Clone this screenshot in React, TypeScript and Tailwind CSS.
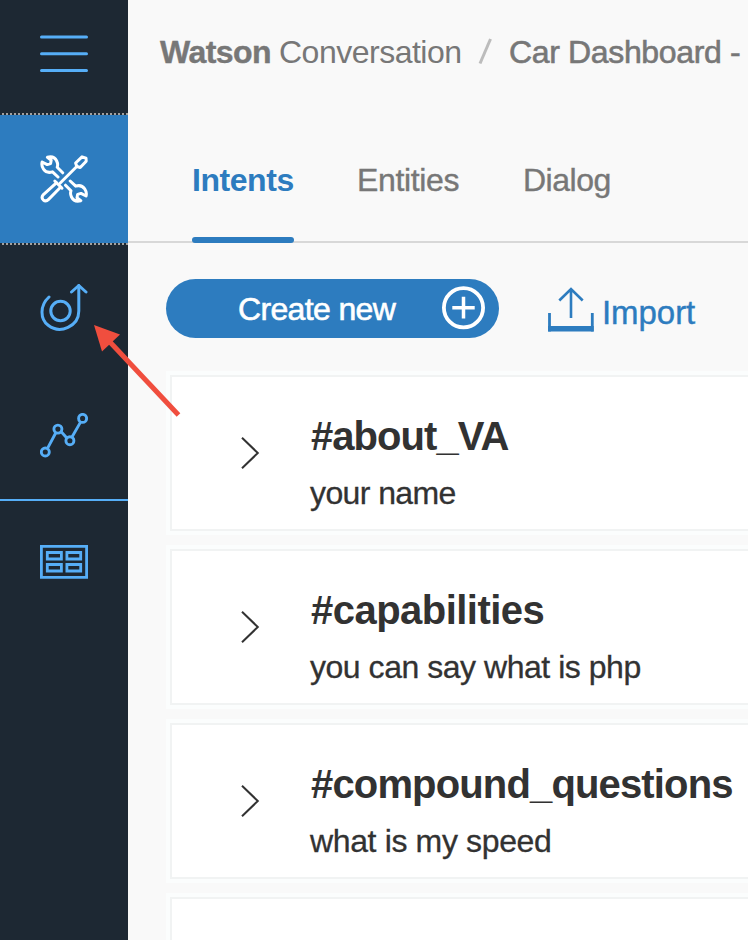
import React from "react";

const intents = [
  { name: "#about_VA", example: "your name", nameTracking: "tracking-[-0.95px]", exampleTracking: "tracking-[-0.6px]" },
  { name: "#capabilities", example: "you can say what is php", nameTracking: "tracking-[-0.53px]", exampleTracking: "tracking-[-0.47px]" },
  { name: "#compound_questions", example: "what is my speed", nameTracking: "tracking-[-0.85px]", exampleTracking: "tracking-[-0.36px]" },
  { name: "", example: "", nameTracking: "", exampleTracking: "" },
];

const wrenchPath =
  "M18 22L12.5 16.8C9 18 5.5 17 3.5 14.2C2 12 1.5 9.5 2.1 7L7.2 9.6L10.6 8.6L11.2 5.2L7.4 2.3C11.2 1.3 15 2.5 16.7 6C17.8 8.3 17.9 10.5 17.2 12.3L22.7 17.8";

function MenuIcon() {
  return (
    <svg className="h-12 w-12" viewBox="0 0 48 48" fill="none" stroke="#56aef7" strokeWidth="3" strokeLinecap="round">
      <path d="M1.5 7H46.5M1.5 23.7H46.5M1.5 40.5H46.5" />
    </svg>
  );
}

function ToolsIcon() {
  return (
    <svg className="h-12 w-12" viewBox="0 0 48 48" fill="none" stroke="#fff" strokeWidth="3" strokeLinecap="round" strokeLinejoin="round">
      <path d={wrenchPath} />
      <path d={wrenchPath} transform="rotate(180 24.1 24)" />
      <path d="M20 28.2L37 11.3" />
      <path d="M36.8 11.5L35.6 8L42 1.8L46 3.2L46.2 6.2L40.2 12.5L36.8 11.5Z" />
      <path d="M14.8 26L22 33.2" />
      <path d="M16.4 27.8L3.4 39.6C1.8 41.4 1.8 43.4 3.2 44.8C4.8 46.3 6.9 46.1 8.6 44.4L20.8 32" />
    </svg>
  );
}

function TargetIcon() {
  return (
    <svg className="h-12 w-12" viewBox="0 0 48 48" fill="none" stroke="#56aef7" strokeWidth="3" strokeLinecap="round" strokeLinejoin="round">
      <circle cx="20.5" cy="27" r="9.7" />
      <path d="M9 13C-.4 21.5 0 35 8.2 41.3C20.2 50.6 38.8 42.2 38.8 27V1.5" />
      <path d="M31.5 8L38.8 1.5L46 8" />
    </svg>
  );
}

function ChartIcon() {
  return (
    <svg className="h-12 w-12" viewBox="0 0 48 48" fill="none" stroke="#56aef7" strokeWidth="2.9">
      <path d="M7.5 35.4L15.7 20M21.2 18.8L26.6 24.8M32 24L40.4 9.4" />
      <circle cx="5.3" cy="39" r="4" />
      <circle cx="17.9" cy="16.1" r="4" />
      <circle cx="29.9" cy="27.7" r="4" />
      <circle cx="42.6" cy="5.4" r="4" />
    </svg>
  );
}

function TableIcon() {
  return (
    <svg className="h-[34px] w-12" viewBox="0 0 48 34" fill="none" stroke="#56aef7" strokeWidth="2.8">
      <path d="M1.4 1.4H46.6V32.4H1.4ZM7.3 7.5H21.4V14H7.3ZM26.9 7.5H40.7V14H26.9ZM7.3 19.5H21.4V26H7.3ZM26.9 19.5H40.7V26H26.9Z" />
    </svg>
  );
}

function DottedLine() {
  return (
    <div className="h-0.5 w-full bg-[repeating-linear-gradient(90deg,#1d2833_0px,#1d2833_2px,#a3a19f_2px,#a3a19f_4px)]" />
  );
}

function Sidebar() {
  return (
    <aside className="flex h-full w-32 shrink-0 flex-col bg-[#1d2833]">
      <div className="flex h-[113px] justify-center pt-[30px]"><MenuIcon /></div>
      <DottedLine />
      <div className="flex h-32 justify-center bg-[#2d7cbf] pt-10"><ToolsIcon /></div>
      <DottedLine />
      <div className="flex h-[127px] justify-center pt-[39px]"><TargetIcon /></div>
      <div className="flex h-[127px] justify-center pt-[41px]"><ChartIcon /></div>
      <div className="h-0.5 bg-[#56aef7]" />
      <div className="flex justify-center pt-11"><TableIcon /></div>
    </aside>
  );
}

function IntentCard({ intent }: { intent: (typeof intents)[number] }) {
  return (
    <article className="flex h-[156px] w-[700px] shrink-0 border-2 border-[#f1f3f3] bg-white shadow-[0_0_0_4px_#fbfdfd]">
      {intent.name && (
        <>
          <svg className="mt-[58px] ml-[68px] h-9 w-5 shrink-0" viewBox="0 0 20 36" fill="none" stroke="#323232" strokeWidth="2">
            <path d="M2 2.7L17.8 18L2 33.3" />
          </svg>
          <div className="mt-[35px] ml-[51px] whitespace-nowrap text-[#323232]">
            <h2 className={"text-[40px] leading-[48px] font-bold " + intent.nameTracking}>{intent.name}</h2>
            <p className={"mt-[13px] -ml-px text-[32px] leading-10 [-webkit-text-stroke:0.3px] " + intent.exampleTracking}>{intent.example}</p>
          </div>
        </>
      )}
    </article>
  );
}

export default function App() {
  return (
    <div className="relative flex h-[940px] w-[748px] overflow-hidden bg-[#f9f9f9] font-['Liberation_Sans',Arial,sans-serif]">
      <Sidebar />
      <main className="flex min-w-0 flex-1 flex-col overflow-hidden">
        <header className="flex h-24 shrink-0 pt-8 pl-8 text-[32px] leading-10 whitespace-nowrap text-[#777]">
          <span className="w-[119px] font-bold tracking-[-0.55px] [-webkit-text-stroke:0.4px]">Watson</span>
          <span className="w-[199px] tracking-[-0.5px]">Conversation</span>
          <svg className="mt-1.5 h-8 w-[15px] shrink-0" viewBox="0 0 15 32" stroke="#bcbcbc" strokeWidth="3">
            <path d="M2 25.5L12.5 1" />
          </svg>
          <span className="ml-4 tracking-[-0.35px] [-webkit-text-stroke:0.6px]">Car Dashboard -</span>
        </header>
        <nav className="flex h-[147px] shrink-0 border-b-2 border-[#d8d8d8] pl-16 text-[32px] leading-10 whitespace-nowrap text-[#777]">
          <div className="relative h-[147px] w-[102px] pt-16 font-bold tracking-[-0.45px] text-[#2d7cbf]">
            Intents
            <div className="absolute bottom-0 left-0 h-1.5 w-[102px] rounded-full bg-[#2d7cbf]" />
          </div>
          <div className="ml-[63px] w-[102px] pt-16 tracking-[-0.35px] [-webkit-text-stroke:0.4px]">Entities</div>
          <div className="ml-[64px] pt-16 tracking-[-0.5px] [-webkit-text-stroke:0.4px]">Dialog</div>
        </nav>
        <div className="flex h-[132px] shrink-0 pt-9 pl-[38px] text-[32px] leading-10 whitespace-nowrap">
          <button className="flex h-[59px] w-[333px] shrink-0 rounded-full bg-[#2d7cbf] pt-2.5 pl-[72px] text-left text-white">
            <span className="w-[204px] tracking-[-0.65px] [-webkit-text-stroke:0.6px]">Create new</span>
            <svg className="-mt-[3px] h-11 w-11" viewBox="0 0 44 44" fill="none" stroke="#fff">
              <circle cx="21.5" cy="21.7" r="19.6" strokeWidth="3.8" />
              <path d="M10.3 21.7H32.7M21.5 10.8V32.6" strokeWidth="3.5" />
            </svg>
          </button>
          <button className="ml-12 flex text-[33px] tracking-[-0.05px] text-[#2d7cbf] [-webkit-text-stroke:0.4px]">
            <svg className="mt-1.5 h-[50px] w-[50px]" viewBox="0 0 50 50" fill="none" stroke="#2d7cbf">
              <path d="M24 33V4.5M12.3 15.5L24 4L35.7 15.5" strokeWidth="2.6" />
              <path d="M2.5 28V46.5M45.3 28V46.5" strokeWidth="2.8" />
              <path d="M1.1 43.8H46.7" strokeWidth="5.6" />
            </svg>
            <span className="mt-3.5 ml-[5px]">Import</span>
          </button>
        </div>
        <section className="flex flex-col gap-[18px] pl-[42px]">
          {intents.map((intent, i) => <IntentCard key={i} intent={intent} />)}
        </section>
      </main>
      <svg className="pointer-events-none absolute top-[320px] left-[90px] h-[100px] w-[94px]" viewBox="90 320 94 100">
        <path d="M109 341L178.5 415" stroke="#f04e3e" strokeWidth="5" />
        <path d="M94 325L120 334.5L102 351.5Z" fill="#f04e3e" />
      </svg>
    </div>
  );
}
